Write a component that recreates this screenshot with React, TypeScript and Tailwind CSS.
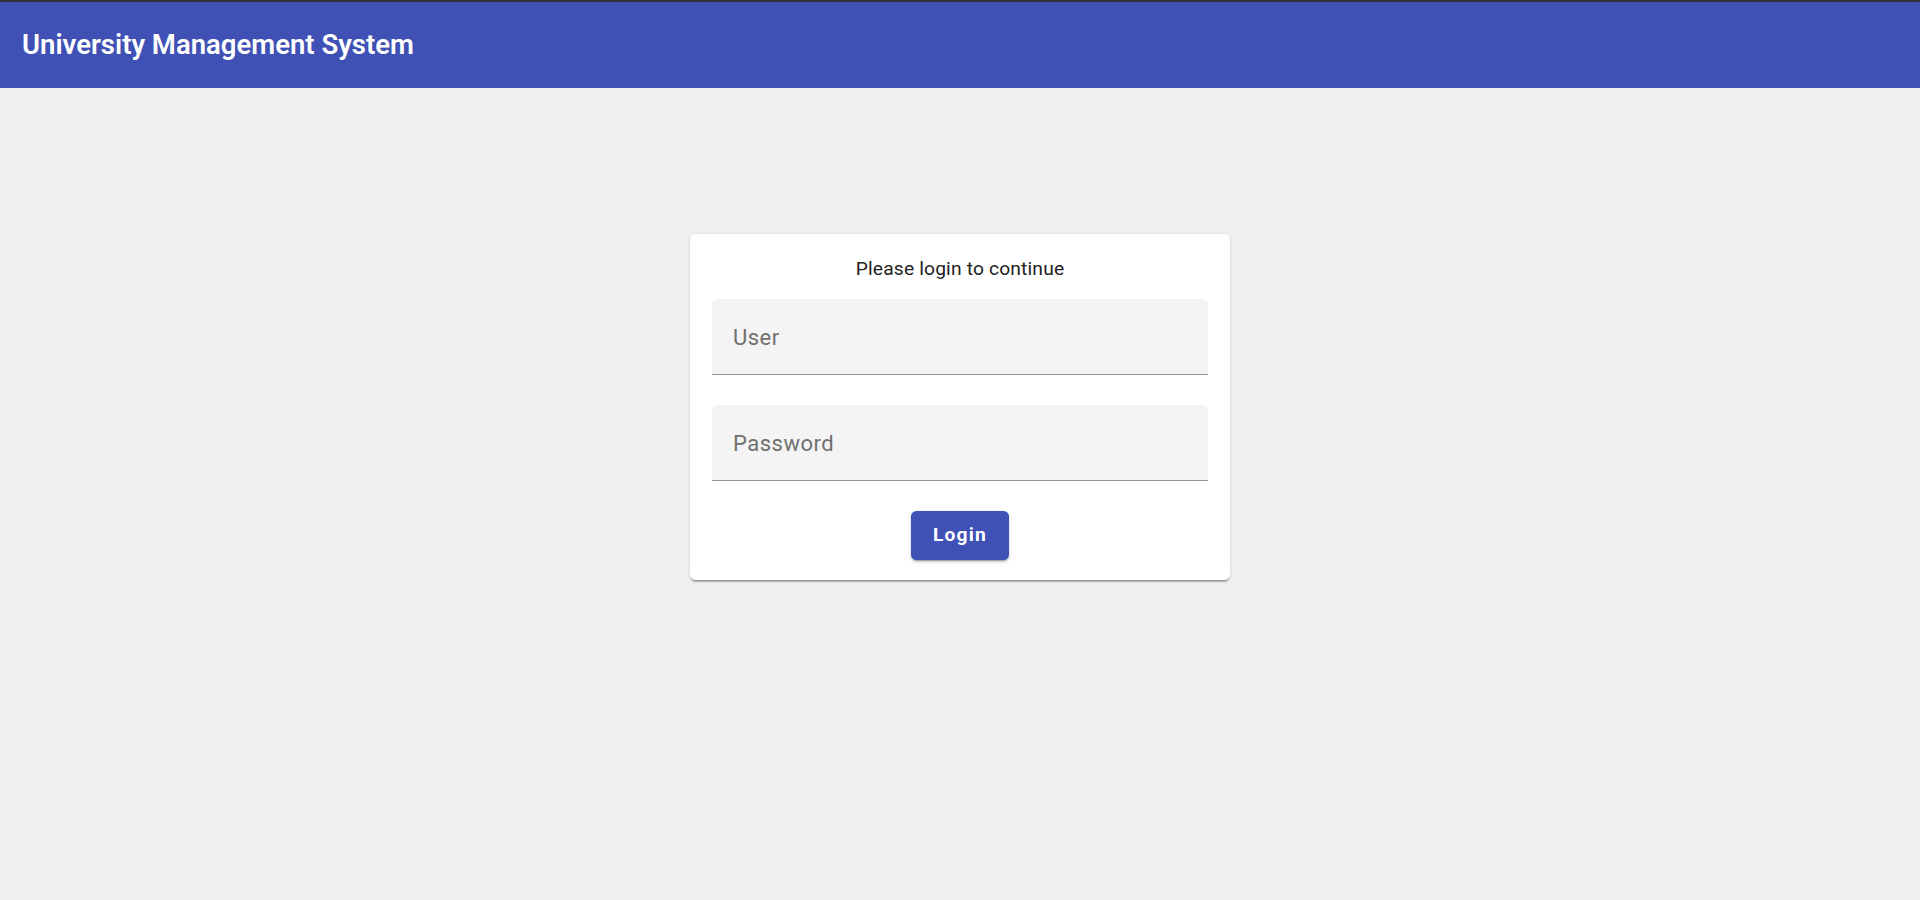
export default function App() {
  return (
    <div className="min-h-[900px] bg-[#f0f0f0] font-['Roboto',sans-serif]">
      <header className="border-t-2 border-[#323236] bg-[#3f51b5]">
        <div className="flex h-[86px] items-center px-[22px]">
          <h1 className="text-[27.5px] font-semibold leading-none text-white">University Management System</h1>
        </div>
      </header>

      <main className="flex justify-center pt-[146px]">
        <section className="w-[540px] rounded-[5.5px] bg-white px-[22px] pb-[20px] pt-[21px] shadow-[0_3px_1px_-1px_rgba(0,0,0,0.2),0_1px_1px_0_rgba(0,0,0,0.14),0_1px_4px_0_rgba(0,0,0,0.12)]">
          <p className="mb-[16px] text-center text-[19.25px] leading-[28px] tracking-[0.15px] text-[#222222]">Please login to continue</p>

          <div className="flex h-[76px] items-center rounded-t-[5.5px] border-b border-[#949494] bg-[#f4f4f4] pl-[21px] pt-[2px]">
            <span className="text-[22px] tracking-[0.5px] text-[#707070]">User</span>
          </div>

          <div className="mt-[30px] flex h-[76px] items-center rounded-t-[5.5px] border-b border-[#949494] bg-[#f4f4f4] pl-[21px] pt-[2px]">
            <span className="text-[22px] tracking-[0.5px] text-[#707070]">Password</span>
          </div>

          <div className="mt-[30px] flex justify-center">
            <button className="h-[49px] w-[98px] rounded-[5.5px] bg-[#3f51b5] text-[19.25px] font-bold tracking-[1.2px] text-white shadow-[0_3px_1px_-2px_rgba(0,0,0,0.2),0_2px_2px_0_rgba(0,0,0,0.14),0_1px_5px_0_rgba(0,0,0,0.12)]">
              Login
            </button>
          </div>
        </section>
      </main>
    </div>
  );
}
